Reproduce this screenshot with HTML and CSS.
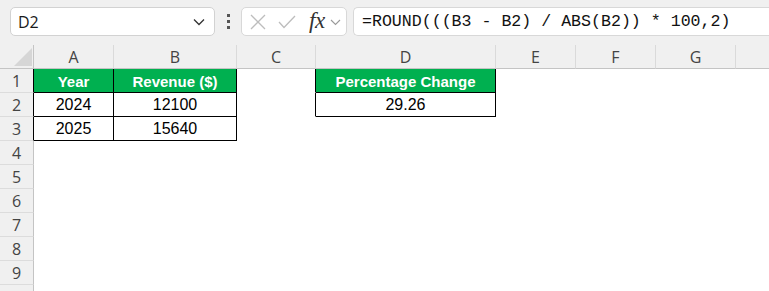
FILE: index.html
```html
<!DOCTYPE html>
<html>
<head>
<meta charset="utf-8">
<link rel="stylesheet" href="styles.css">
</head>
<body>
<div class="toolbar">
  <div class="namebox">
    <span class="name">D2</span>
    <svg class="chev" width="12" height="8" viewBox="0 0 12 8"><path d="M1 1.5 L6 6.5 L11 1.5" fill="none" stroke="#333" stroke-width="1.3"/></svg>
  </div>
  <div class="dots"><i></i><i></i><i></i></div>
  <div class="fxbox">
    <svg class="ico" width="16" height="16" viewBox="0 0 16 16"><path d="M1 1 L15 15 M15 1 L1 15" stroke="#bdbdbd" stroke-width="1.3" fill="none"/></svg>
    <svg class="ico" width="18" height="14" viewBox="0 0 18 14"><path d="M1 7 L6 12.5 L17 1" stroke="#bdbdbd" stroke-width="1.3" fill="none"/></svg>
    <span class="fx">fx</span>
    <svg class="chev-s" width="11" height="7" viewBox="0 0 11 7"><path d="M1 1 L5.5 5.5 L10 1" fill="none" stroke="#9a9a9a" stroke-width="1.1"/></svg>
  </div>
  <div class="formula">=ROUND(((B3 - B2) / ABS(B2)) * 100,2)</div>
</div>
<div class="sheet">
  <div class="c h corner"><svg width="18" height="18" viewBox="0 0 18 18"><path d="M18 0 L18 18 L0 18 Z" fill="#d6d6d6"/></svg></div>
  <div class="c h">A</div><div class="c h">B</div><div class="c h">C</div><div class="c h">D</div><div class="c h">E</div><div class="c h">F</div><div class="c h">G</div><div class="c h last"></div>

  <div class="c rh br">1</div><div class="c t g">Year</div><div class="c t g">Revenue ($)</div><div class="c br"></div><div class="c t g">Percentage Change</div><div class="c"></div><div class="c"></div><div class="c"></div><div class="c"></div>
  <div class="c rh br">2</div><div class="c t">2024</div><div class="c t">12100</div><div class="c br"></div><div class="c t">29.26</div><div class="c"></div><div class="c"></div><div class="c"></div><div class="c"></div>
  <div class="c rh br">3</div><div class="c t">2025</div><div class="c t">15640</div><div class="c"></div><div class="c"></div><div class="c"></div><div class="c"></div><div class="c"></div><div class="c"></div>
  <div class="c rh">4</div><div class="c"></div><div class="c"></div><div class="c"></div><div class="c"></div><div class="c"></div><div class="c"></div><div class="c"></div><div class="c"></div>
  <div class="c rh">5</div><div class="c"></div><div class="c"></div><div class="c"></div><div class="c"></div><div class="c"></div><div class="c"></div><div class="c"></div><div class="c"></div>
  <div class="c rh">6</div><div class="c"></div><div class="c"></div><div class="c"></div><div class="c"></div><div class="c"></div><div class="c"></div><div class="c"></div><div class="c"></div>
  <div class="c rh">7</div><div class="c"></div><div class="c"></div><div class="c"></div><div class="c"></div><div class="c"></div><div class="c"></div><div class="c"></div><div class="c"></div>
  <div class="c rh">8</div><div class="c"></div><div class="c"></div><div class="c"></div><div class="c"></div><div class="c"></div><div class="c"></div><div class="c"></div><div class="c"></div>
  <div class="c rh">9</div><div class="c"></div><div class="c"></div><div class="c"></div><div class="c"></div><div class="c"></div><div class="c"></div><div class="c"></div><div class="c"></div>
  <div class="c rh"></div><div class="c"></div><div class="c"></div><div class="c"></div><div class="c"></div><div class="c"></div><div class="c"></div><div class="c"></div><div class="c"></div>
</div>
</body>
</html>
```

FILE: styles.css
```css
* { box-sizing: border-box; }
html, body { margin: 0; padding: 0; }
body {
  background: #f0f0f0;
  width: 769px;
  height: 291px;
  overflow: hidden;
  font-family: "Liberation Sans", Arial, sans-serif;
}
.toolbar {
  height: 45px;
  display: flex;
  align-items: flex-start;
  padding: 7px 0 0 10px;
  overflow: hidden;
}
.namebox {
  width: 205px;
  height: 29px;
  background: #fff;
  border: 1px solid #d2d2d2;
  border-radius: 5px;
  display: flex;
  align-items: center;
  justify-content: space-between;
  padding: 0 9px 0 7px;
  flex: none;
}
.name {
  font-family: "Open Sans", "Noto Sans", sans-serif;
  font-size: 16px;
  color: #1a1a1a;
}
.dots {
  width: 26px;
  height: 29px;
  display: flex;
  flex-direction: column;
  align-items: center;
  justify-content: center;
  gap: 3px;
  flex: none;
}
.dots i {
  width: 3px;
  height: 3px;
  background: #555;
  display: block;
}
.fxbox {
  width: 106px;
  height: 29px;
  background: #fff;
  border: 1px solid #d8d8d8;
  border-radius: 5px;
  display: flex;
  align-items: center;
  padding: 0 4px 0 8px;
  flex: none;
}
.fxbox .ico { flex: none; margin-right: 12px; }
.fxbox .ico + .ico { margin-right: 13px; }
.fx {
  font-family: "Liberation Serif", "DejaVu Serif", serif;
  font-style: italic;
  font-size: 23px;
  color: #333;
  line-height: 1;
  margin-top: -3px;
  letter-spacing: -0.5px;
}
.chev-s { margin-left: 5px; margin-top: 2px; }
.formula {
  margin-left: 6px;
  width: 440px;
  height: 29px;
  background: #fff;
  border: 1px solid #d8d8d8;
  border-radius: 5px 0 0 5px;
  border-right: none;
  font-family: "Liberation Mono", "DejaVu Sans Mono", monospace;
  font-size: 16.6px;
  color: #111;
  display: flex;
  align-items: center;
  padding-left: 8px;
  white-space: pre;
  flex: none;
}
.sheet {
  display: grid;
  grid-template-columns: 34px 80px 123px 79px 180px 80px 80px 80px 1fr;
  grid-auto-rows: 24px;
  background: #fff;
}
.c {
  border-right: 1px solid #fff;
  border-bottom: 1px solid #fff;
  display: flex;
  align-items: center;
  justify-content: center;
  font-size: 16px;
  color: #000;
  padding-top: 1px;
}
.h {
  background: #f0f0f0;
  border-right-color: #dadada;
  border-bottom-color: #c4c4c4;
  font-family: "Open Sans", "Noto Sans", sans-serif;
  font-size: 16px;
  color: #444;
}
.h.last { border-right: none; }
.corner {
  border-right-color: #c4c4c4;
  align-items: flex-end;
  justify-content: flex-end;
  padding: 0 1px 2px 0;
}
.rh {
  background: #f0f0f0;
  border-right-color: #c4c4c4;
  border-bottom-color: #dcdcdc;
  font-family: "Open Sans", "Noto Sans", sans-serif;
  font-size: 16px;
  color: #444;
}
.br { border-right-color: #000; }
.t {
  border-right-color: #000;
  border-bottom-color: #000;
}
.g {
  background: #00b050;
  color: #fff;
  font-weight: bold;
  font-size: 15px;
}
```
